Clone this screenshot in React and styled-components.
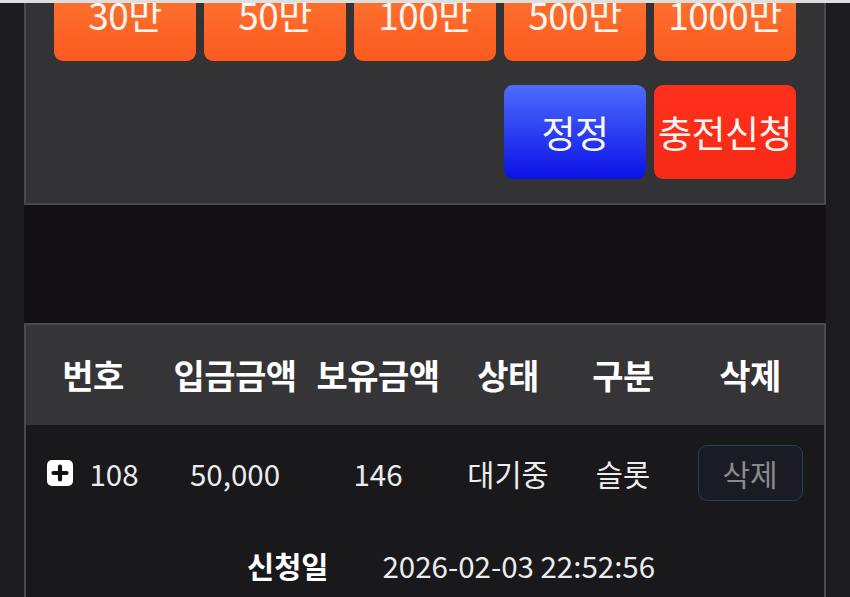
import React from "react";
import styled, { createGlobalStyle } from "styled-components";

const Global = createGlobalStyle`
  html, body { margin: 0; padding: 0; background: #1c1b1e; }
  body { font-family: "Noto Sans CJK KR", "Noto Sans", sans-serif; overflow: hidden; }
`;

const TopStrip = styled.div`
  height: 3px;
  background: #dedede;
`;

const Viewport = styled.div`
  height: 594px;
  overflow: hidden;
`;

const Column = styled.div`
  margin: -60px 24px 0;
  background: #121015;
  min-height: 700px;
`;

const Panel = styled.section`
  background: #333235;
  border: 2px solid #4a494c;
  padding: 22px 28px 24px;
  display: flex;
  flex-direction: column;
  gap: 24px;
`;

const ButtonRow = styled.div`
  display: grid;
  grid-template-columns: repeat(5, 142px);
  gap: 8px;
  justify-content: space-between;
`;

const tones = {
  orange: "linear-gradient(180deg, #ff7c34 0%, #fb5a1f 100%)",
  blue: "linear-gradient(180deg, #4d6cff 0%, #0a12e4 100%)",
  red: "linear-gradient(180deg, #ff301b 0%, #f72a17 100%)",
};

const ActionButton = styled.button`
  grid-column: ${(p) => p.$col || "auto"};
  height: 94px;
  border: none;
  border-radius: 9px;
  background: ${(p) => tones[p.$tone]};
  color: #fbf6f2;
  font-family: inherit;
  font-size: 37px;
  font-weight: 400;
  letter-spacing: -0.5px;
  white-space: nowrap;
  padding: 0;
  overflow: hidden;
  cursor: pointer;
`;

const Spacer = styled.div`
  height: 118px;
`;

const Table = styled.section`
  border: 2px solid #4a494c;
  border-bottom: none;
  background: #19181b;
`;

const cols = "134px 150px 136px 124px 106px 1fr";

const HeadRow = styled.div`
  display: grid;
  grid-template-columns: ${cols};
  box-sizing: border-box;
  height: 100px;
  padding-bottom: 2px;
  align-items: center;
  background: #353437;
`;

const HeadCell = styled.div`
  text-align: center;
  color: #ffffff;
  font-size: 34px;
  font-weight: 700;
  letter-spacing: -0.5px;
  white-space: nowrap;
`;

const BodyRow = styled.div`
  display: grid;
  grid-template-columns: ${cols};
  box-sizing: border-box;
  height: 100px;
  padding-bottom: 4px;
  align-items: center;
`;

const Cell = styled.div`
  display: flex;
  align-items: center;
  justify-content: center;
  gap: 16px;
  color: #ececec;
  font-size: 29.5px;
  white-space: nowrap;
`;

const PlusBox = styled.svg`
  width: 26px;
  height: 26px;
  flex: none;
`;

const DeleteButton = styled.button`
  width: 105px;
  height: 56px;
  border: 1.5px solid #2d3b5c;
  border-radius: 9px;
  background: #1b1c23;
  color: #8a8a8d;
  font-family: inherit;
  font-size: 30px;
  padding: 0;
`;

const DetailRow = styled.div`
  display: flex;
  align-items: center;
  gap: 54px;
  padding: 19px 0 30px 221px;
  color: #ececec;
  font-size: 29.5px;
`;

const DetailLabel = styled.span`
  font-weight: 700;
  color: #ffffff;
`;

const amounts = ["30만", "50만", "100만", "500만", "1000만"];
const headers = ["번호", "입금금액", "보유금액", "상태", "구분", "삭제"];

export default function App() {
  return (
    <>
      <Global />
      <TopStrip />
      <Viewport>
        <Column>
          <Panel>
            <ButtonRow>
              {amounts.map((a) => (
                <ActionButton key={a} $tone="orange">
                  {a}
                </ActionButton>
              ))}
            </ButtonRow>
            <ButtonRow>
              <ActionButton $tone="blue" $col="4">
                정정
              </ActionButton>
              <ActionButton $tone="red" $col="5">
                충전신청
              </ActionButton>
            </ButtonRow>
          </Panel>
          <Spacer />
          <Table>
            <HeadRow>
              {headers.map((h) => (
                <HeadCell key={h}>{h}</HeadCell>
              ))}
            </HeadRow>
            <BodyRow>
              <Cell>
                <PlusBox viewBox="0 0 26 26">
                  <rect x="0" y="0" width="26" height="26" rx="5" fill="#ffffff" />
                  <path d="M13 6.5v13M6.5 13h13" stroke="#111" strokeWidth="4.2" strokeLinecap="round" />
                </PlusBox>
                108
              </Cell>
              <Cell>50,000</Cell>
              <Cell>146</Cell>
              <Cell>대기중</Cell>
              <Cell>슬롯</Cell>
              <Cell>
                <DeleteButton>삭제</DeleteButton>
              </Cell>
            </BodyRow>
            <DetailRow>
              <DetailLabel>신청일</DetailLabel>
              <span>2026-02-03 22:52:56</span>
            </DetailRow>
          </Table>
        </Column>
      </Viewport>
    </>
  );
}
